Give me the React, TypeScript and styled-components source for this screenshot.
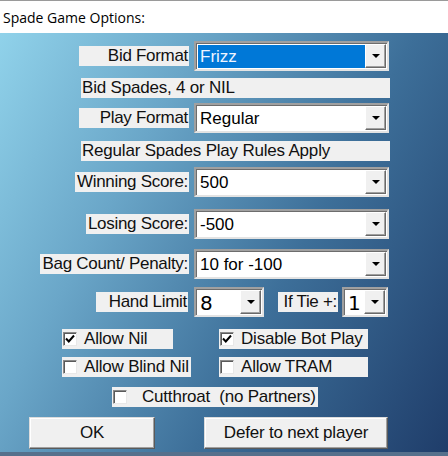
import styled, { createGlobalStyle } from 'styled-components';

const GlobalStyle = createGlobalStyle`
  body {
    margin: 0;
    background: #ffffff;
    font-family: 'Liberation Sans', Arial, sans-serif;
  }
`;

const Dialog = styled.div`
  display: flex;
  flex-direction: column;
  width: 448px;
  height: 456px;
  overflow: hidden;
`;

const TitleBar = styled.div`
  display: flex;
  align-items: center;
  height: 32px;
  padding-left: 3px;
  border-top: 1px solid #9a9a9a;
  background: #ffffff;
  color: #000000;
  font-family: 'Open Sans', 'Noto Sans', sans-serif;
  font-size: 14px;
`;

const Body = styled.div`
  display: flex;
  flex-direction: column;
  height: 419px;
  background: linear-gradient(118deg, #90d2ea 0%, #6aa6c8 30%, #3d6f99 62%, #1f3d6a 100%);
`;

const BottomEdge = styled.div`
  height: 4px;
  background: #56708c;
`;

const Row = styled.div<{ top: number }>`
  display: flex;
  align-items: center;
  margin-top: ${(p) => p.top}px;
`;

const LabelCell = styled.div`
  display: flex;
  justify-content: flex-end;
  width: 189px;
`;

const Label = styled.div<{ width?: number; right?: number; left?: number }>`
  display: flex;
  justify-content: flex-end;
  align-items: center;
  width: ${(p) => (p.width ? `${p.width}px` : 'auto')};
  height: 20px;
  margin-left: ${(p) => p.left || 0}px;
  margin-right: ${(p) => p.right || 0}px;
  padding: 0 1px 0 2px;
  background: #f0f0f0;
  color: #111111;
  font-size: 17px;
  letter-spacing: -0.3px;
  white-space: nowrap;
`;

const InfoBox = styled.div`
  display: flex;
  align-items: center;
  width: 308px;
  height: 20px;
  margin-left: 81px;
  padding-left: 1px;
  background: #f0f0f0;
  color: #111111;
  font-size: 17px;
  letter-spacing: -0.2px;
  white-space: nowrap;
`;

const Select = styled.div<{ width: number; gapLeft: number }>`
  display: flex;
  box-sizing: border-box;
  width: ${(p) => p.width}px;
  height: 30px;
  margin-left: ${(p) => p.gapLeft}px;
  padding: 1px;
  border: 2px solid;
  border-color: #a0a0a0 #e3e3e3 #e3e3e3 #a0a0a0;
  background: #ffffff;
  box-shadow: inset 1px 1px 0 #6d6d6d;
`;

const SelectValue = styled.div<{ selected?: boolean; big?: boolean }>`
  display: flex;
  flex: 1;
  align-items: center;
  padding-left: 2px;
  margin: 1px 0 0 1px;
  background: ${(p) => (p.selected ? '#0078d7' : '#ffffff')};
  color: ${(p) => (p.selected ? '#eef4ff' : '#000000')};
  font-size: ${(p) => (p.big ? '20px' : '17px')};
  font-family: ${(p) => (p.big ? "'DejaVu Sans', sans-serif" : "'Liberation Sans', Arial, sans-serif")};
`;

const ArrowButton = styled.div`
  display: flex;
  align-items: center;
  justify-content: center;
  box-sizing: border-box;
  width: 21px;
  border: 1px solid;
  border-color: #ffffff #696969 #696969 #ffffff;
  background: #f0f0f0;
  box-shadow: inset -1px -1px 0 #a0a0a0;
`;

const Arrow = styled.div`
  width: 0;
  height: 0;
  border-left: 4px solid transparent;
  border-right: 4px solid transparent;
  border-top: 4px solid #000000;
`;

const CheckRow = styled.div<{ top: number }>`
  display: grid;
  grid-template-columns: 157px auto;
  margin-top: ${(p) => p.top}px;
  padding-left: 62px;
`;

const CheckItem = styled.div<{ width: number; textLeft: number; shift?: number }>`
  display: flex;
  align-items: center;
  box-sizing: border-box;
  width: ${(p) => p.width}px;
  height: 20px;
  margin-left: ${(p) => p.shift || 0}px;
  padding-left: 1px;
  background: #f0f0f0;
  color: #111111;
  font-size: 17px;
  letter-spacing: -0.2px;
  white-space: pre;

  span {
    margin-left: ${(p) => p.textLeft}px;
  }
`;

const Box = styled.div`
  display: flex;
  align-items: center;
  justify-content: center;
  box-sizing: border-box;
  width: 14px;
  height: 14px;
  border: 1px solid;
  border-color: #8a8a8a #e8e8e8 #e8e8e8 #8a8a8a;
  background: #ffffff;
  box-shadow: inset 1px 1px 0 #5a5a5a;
`;

const ButtonRow = styled.div`
  display: flex;
  margin-top: 10px;
  padding-left: 29px;
  gap: 49px;
`;

const Button = styled.div<{ width: number }>`
  display: flex;
  align-items: center;
  justify-content: center;
  box-sizing: border-box;
  width: ${(p) => p.width}px;
  height: 32px;
  border: 1px solid;
  border-color: #dcdcdc #5a5a5a #5a5a5a #dcdcdc;
  background: #f0f0f0;
  box-shadow: inset -1px -1px 0 #a0a0a0, inset 1px 1px 0 #ffffff;
  color: #111111;
  font-size: 17px;
  letter-spacing: -0.2px;
`;

const Check = () => (
  <svg width="10" height="10" viewBox="0 0 10 10">
    <path d="M1 4.5 L3.8 7.5 L9 1.5" fill="none" stroke="#000" strokeWidth="2" />
  </svg>
);

const Dropdown = ({
  value,
  width,
  gapLeft,
  selected,
  big,
}: {
  value: string;
  width: number;
  gapLeft: number;
  selected?: boolean;
  big?: boolean;
}) => (
  <Select width={width} gapLeft={gapLeft}>
    <SelectValue selected={selected} big={big}>
      {value}
    </SelectValue>
    <ArrowButton>
      <Arrow />
    </ArrowButton>
  </Select>
);

const App = () => {
  return (
    <>
      <GlobalStyle />
      <Dialog>
        <TitleBar>Spade Game Options:</TitleBar>
        <Body>
          <Row top={8}>
            <LabelCell>
              <Label width={107}>Bid Format</Label>
            </LabelCell>
            <Dropdown value="Frizz" width={195} gapLeft={5} selected />
          </Row>
          <Row top={7}>
            <InfoBox>Bid Spades, 4 or NIL</InfoBox>
          </Row>
          <Row top={5}>
            <LabelCell>
              <Label width={107}>Play Format</Label>
            </LabelCell>
            <Dropdown value="Regular" width={195} gapLeft={5} />
          </Row>
          <Row top={8}>
            <InfoBox>Regular Spades Play Rules Apply</InfoBox>
          </Row>
          <Row top={6}>
            <LabelCell>
              <Label>Winning Score:</Label>
            </LabelCell>
            <Dropdown value="500" width={195} gapLeft={5} />
          </Row>
          <Row top={12}>
            <LabelCell>
              <Label>Losing Score:</Label>
            </LabelCell>
            <Dropdown value="-500" width={195} gapLeft={5} />
          </Row>
          <Row top={10}>
            <LabelCell>
              <Label>Bag Count/ Penalty:</Label>
            </LabelCell>
            <Dropdown value="10 for -100" width={195} gapLeft={5} />
          </Row>
          <Row top={8}>
            <LabelCell>
              <Label width={89} right={1}>
                Hand Limit
              </Label>
            </LabelCell>
            <Dropdown value="8" width={70} gapLeft={5} big />
            <Label width={57} left={14}>
              If Tie +:
            </Label>
            <Dropdown value="1" width={46} gapLeft={4} big />
          </Row>
          <CheckRow top={12}>
            <CheckItem width={111} textLeft={7}>
              <Box>
                <Check />
              </Box>
              <span>Allow Nil</span>
            </CheckItem>
            <CheckItem width={149} textLeft={7}>
              <Box>
                <Check />
              </Box>
              <span>Disable Bot Play</span>
            </CheckItem>
          </CheckRow>
          <CheckRow top={8}>
            <CheckItem width={129} textLeft={7}>
              <Box />
              <span>Allow Blind Nil</span>
            </CheckItem>
            <CheckItem width={149} textLeft={7}>
              <Box />
              <span>Allow TRAM</span>
            </CheckItem>
          </CheckRow>
          <CheckRow top={10}>
            <CheckItem width={206} textLeft={15} shift={50}>
              <Box />
              <span>Cutthroat  (no Partners)</span>
            </CheckItem>
          </CheckRow>
          <ButtonRow>
            <Button width={126}>OK</Button>
            <Button width={184}>Defer to next player</Button>
          </ButtonRow>
        </Body>
        <BottomEdge />
      </Dialog>
    </>
  );
};

export default App;
